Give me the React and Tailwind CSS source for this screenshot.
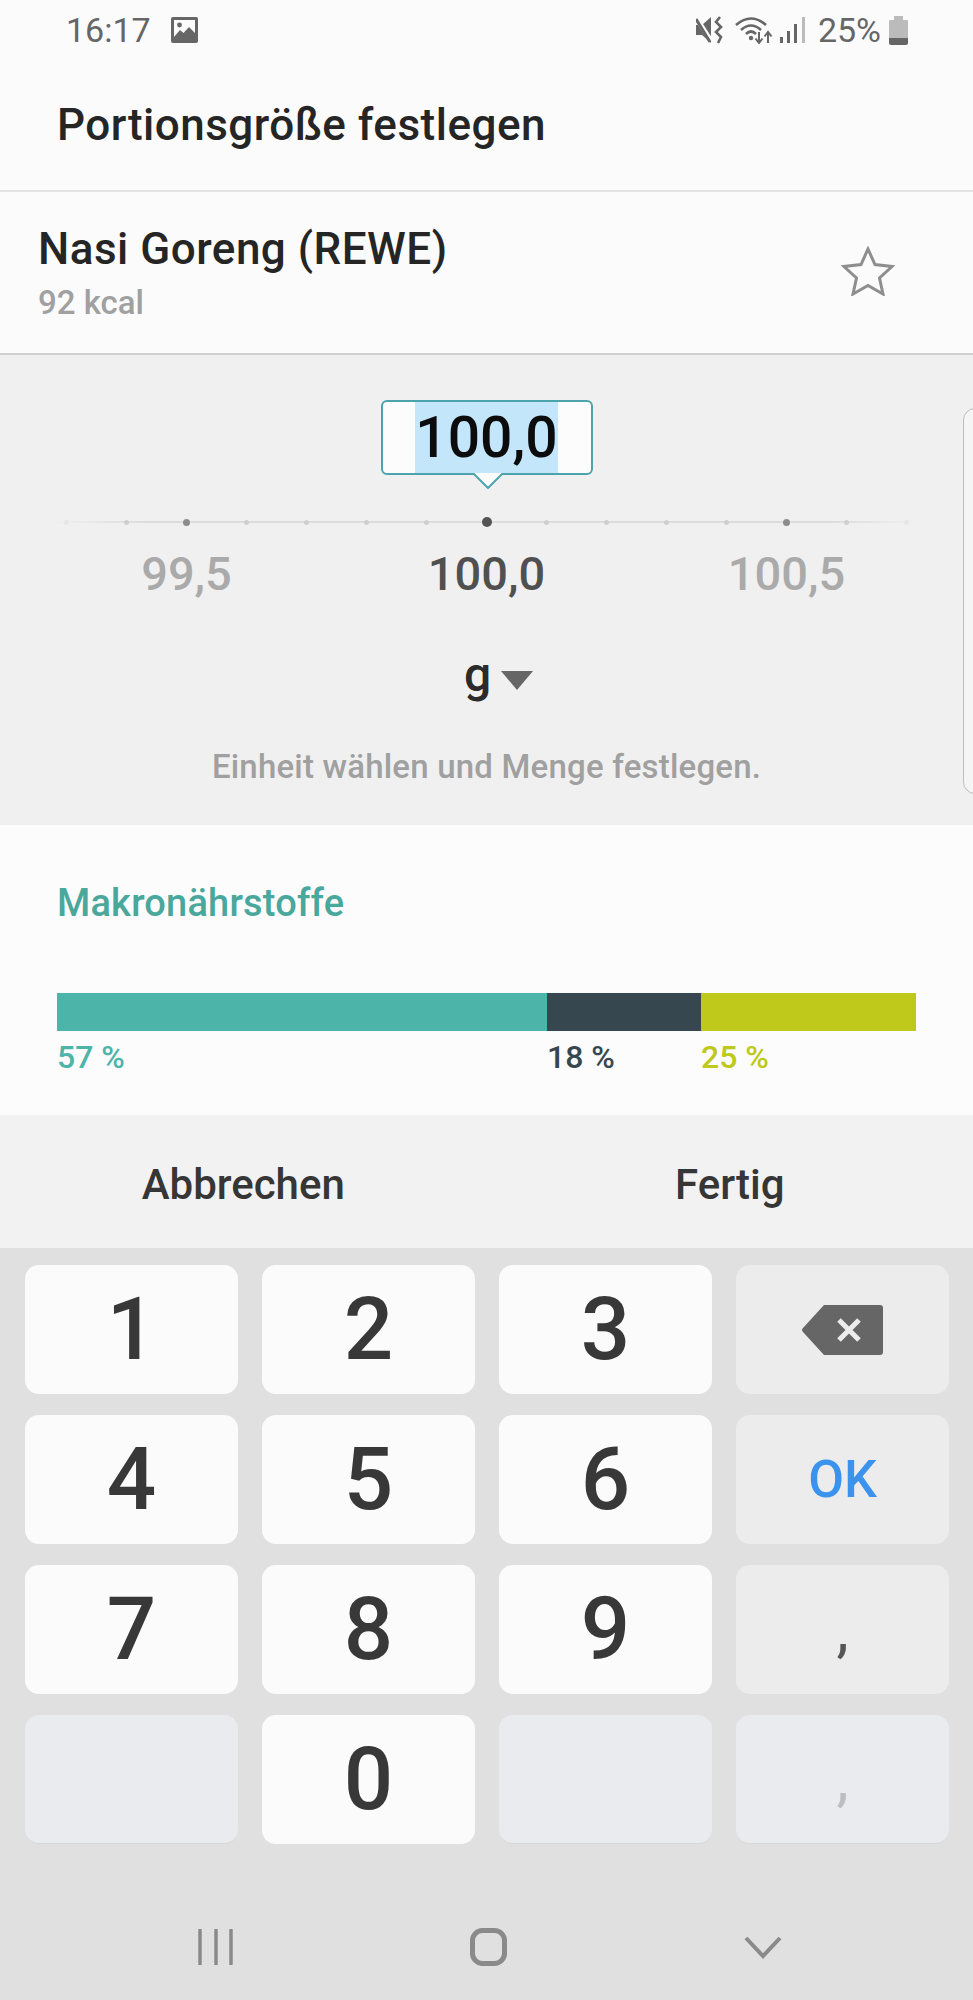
import React from 'react';

//------------------------------------------------------------------------------------------------
// Static data
//------------------------------------------------------------------------------------------------
const rulerTicks = [0, 1, 2, 3, 4, 5, 6, 7, 8, 9, 10, 11, 12, 13, 14];
const faintTicks = [0, 14];
const majorTicks = [2, 12];
const centerTick = 7;

const bodyFont = 'font-["Roboto",_"Liberation_Sans",_sans-serif]';

//------------------------------------------------------------------------------------------------
// Status bar icons
//------------------------------------------------------------------------------------------------
function ImageIcon() {
  return (
    <svg width="27" height="26" viewBox="0 0 27 26" className="ml-[20px]">
      <rect width="27" height="26" rx="2" fill="#666" />
      <rect x="3" y="3" width="21" height="20" fill="#fbfbfb" />
      <circle cx="8.5" cy="8" r="2.4" fill="#666" />
      <path d="M3 20 L9 13 L12.5 16 L18 10 L24 16 V23 H3 Z" fill="#666" />
    </svg>
  );
}

function MuteIcon() {
  return (
    <svg width="27" height="28" viewBox="0 0 27 28">
      <path d="M0 9 H6 L15 1 V27 L6 19 H0 Z" fill="#666" />
      <path d="M1 3 L15 25" stroke="#fbfbfb" strokeWidth="5" />
      <path d="M0 3 L14 26" stroke="#666" strokeWidth="3" />
      <path d="M24 1 L20 6 L25 11 L20 16 L25 21 L22 27" fill="none" stroke="#666" strokeWidth="2.6" />
    </svg>
  );
}

function WifiIcon() {
  return (
    <svg width="38" height="28" viewBox="0 0 38 28">
      <path d="M1 9 Q16 -4 31 9" fill="none" stroke="#666" strokeWidth="2.6" />
      <path d="M6 14 Q16 5 26 14" fill="none" stroke="#666" strokeWidth="2.6" />
      <path d="M11 18 Q16 13 21 18" fill="none" stroke="#666" strokeWidth="2.6" />
      <circle cx="16" cy="22" r="2.2" fill="#666" />
      <path d="M24 16 V26 M20.5 22.5 L24 27 L27.5 22.5" fill="none" stroke="#666" strokeWidth="2" />
      <path d="M33 27 V17 M29.5 20.5 L33 16 L36.5 20.5" fill="none" stroke="#666" strokeWidth="2" />
    </svg>
  );
}

function SignalIcon() {
  return (
    <svg width="25" height="26" viewBox="0 0 25 26">
      <rect x="0" y="20" width="3" height="6" fill="#666" />
      <rect x="7" y="14" width="3" height="12" fill="#666" />
      <rect x="14" y="7" width="3" height="19" fill="#666" />
      <rect x="22" y="0" width="3" height="26" fill="#bbb" />
    </svg>
  );
}

function BatteryIcon() {
  return (
    <svg width="19" height="29" viewBox="0 0 19 29" className="ml-[8px]">
      <path d="M5 0 H14 V4 H18 Q19 4 19 5 V22 H0 V5 Q0 4 1 4 H5 Z" fill="#bbb" />
      <path d="M0 22 H19 V27 Q19 29 17 29 H2 Q0 29 0 27 Z" fill="#666" />
    </svg>
  );
}

//------------------------------------------------------------------------------------------------
// Status bar
//------------------------------------------------------------------------------------------------
function StatusBar() {
  return (
    <div className="flex h-[60px] items-center justify-between pl-[66px] pr-[65px] text-[34px] leading-none text-[#666]">
      <div className="flex items-center">
        <span>16:17</span>
        <ImageIcon />
      </div>
      <div className="flex items-center">
        <MuteIcon />
        <div className="ml-[12px]"><WifiIcon /></div>
        <div className="ml-[7px]"><SignalIcon /></div>
        <span className="ml-[13px]">25%</span>
        <BatteryIcon />
      </div>
    </div>
  );
}

//------------------------------------------------------------------------------------------------
// Amount picker (bubble, ruler, unit)
//------------------------------------------------------------------------------------------------
function AmountBubble() {
  return (
    <div className="relative flex h-[75px] w-[212px] justify-center rounded-[6px] border-2 border-[#4ba4ac] bg-[#fcfcfc]">
      <span className="flex h-full w-[143px] items-center justify-center bg-[#c3e6fb] text-[57px] font-medium leading-none text-[#0c0c0c]">
        100,0
      </span>
      <svg width="32" height="16" viewBox="0 0 32 16" className="absolute left-[89px] top-[71px]">
        <path d="M1 0 L16 15 L31 0" fill="#fcfcfc" stroke="#4ba4ac" strokeWidth="2" />
        <rect x="3" y="0" width="26" height="1" fill="#fcfcfc" />
      </svg>
    </div>
  );
}

function RulerTick({ index }) {
  if (index === centerTick) {
    return <span className="size-[10px] rounded-full bg-[#555]" />;
  }
  if (majorTicks.includes(index)) {
    return <span className="size-[7px] rounded-full bg-[#8c8c8c]" />;
  }
  if (faintTicks.includes(index)) {
    return <span className="size-[5px] rounded-full bg-[#e6e6e6]" />;
  }
  return <span className="size-[5px] rounded-full bg-[#cfcfcf]" />;
}

function Ruler() {
  return (
    <div className="mt-[40px] grid h-[14px] w-[900px] grid-cols-15 bg-[linear-gradient(to_right,transparent_2%,#dcdcdc_12%,#dcdcdc_88%,transparent_98%)] bg-[length:100%_2px] bg-center bg-no-repeat">
      {rulerTicks.map((tick) => (
        <div key={tick} className="flex items-center justify-center">
          <RulerTick index={tick} />
        </div>
      ))}
    </div>
  );
}

function AmountPicker() {
  return (
    <div className="relative flex h-[470px] flex-col items-center overflow-hidden bg-[#f0f0f0] pt-[45px]">
      <AmountBubble />
      <Ruler />
      <div className="mt-[17px] grid w-[900px] grid-cols-3 text-center text-[47px] font-medium leading-[56px] text-[#aaaaaa]">
        <span>99,5</span>
        <span className="text-[#505050]">100,0</span>
        <span>100,5</span>
      </div>
      <div className="ml-[24px] mt-[45px] flex h-[56px] items-center">
        <span className="text-[48px] font-medium leading-none text-[#2b2b2b]">g</span>
        <svg width="32" height="19" viewBox="0 0 32 19" className="ml-[10px] mt-[10px]">
          <path d="M0 0 H32 L16 19 Z" fill="#666" />
        </svg>
      </div>
      <div className="mt-[44px] text-[33px] font-medium leading-[40px] tracking-[0.2px] text-[#a0a0a0]">
        Einheit wählen und Menge festlegen.
      </div>
      {/* edge of the panel peeking in from the right */}
      <div className="absolute left-[963px] top-[53px] h-[386px] w-[20px] rounded-l-[12px] border border-[#bdbdbd] bg-[#f5f5f5]" />
    </div>
  );
}

//------------------------------------------------------------------------------------------------
// Macro nutrient bar
//------------------------------------------------------------------------------------------------
function Macros() {
  return (
    <div className="h-[290px] bg-[#fcfcfc] px-[57px] pt-[54px]">
      <div className="text-[38px] font-medium leading-[48px] tracking-[0.2px] text-[#4aa79c]">Makronährstoffe</div>
      <div className="mt-[66px] flex h-[38px] w-[859px]">
        <div className="w-[490px] bg-[#4db4aa]" />
        <div className="w-[154px] bg-[#37474f]" />
        <div className="w-[215px] bg-[#bec91c]" />
      </div>
      <div className="mt-[6px] flex w-[859px] text-[32px] font-medium leading-[40px]">
        <span className="w-[490px] text-[#4db4aa]">57 %</span>
        <span className="w-[154px] text-[#37474f]">18 %</span>
        <span className="w-[215px] text-[#bec91c]">25 %</span>
      </div>
    </div>
  );
}

//------------------------------------------------------------------------------------------------
// Number keyboard
//------------------------------------------------------------------------------------------------
function DigitKey({ value }) {
  return (
    <div className="flex h-[129px] items-center justify-center rounded-[14px] bg-[#fbfbfb] text-[87px] font-medium leading-none text-[#383838]">
      {value}
    </div>
  );
}

function Keyboard() {
  return (
    <div className="flex flex-1 flex-col bg-[#e0e0e0] pt-[17px]">
      <div className="grid grid-cols-[repeat(4,213px)] gap-x-[24px] gap-y-[21px] px-[25px]">
        <DigitKey value="1" />
        <DigitKey value="2" />
        <DigitKey value="3" />
        <div className="flex h-[129px] items-center justify-center rounded-[14px] bg-[#ececec]">
          <svg width="81" height="50" viewBox="0 0 81 50">
            <path d="M22 0 H78 Q81 0 81 3 V47 Q81 50 78 50 H22 L1 27 Q-1 25 1 23 Z" fill="#666" />
            <path d="M37 15 L57 35 M57 15 L37 35" stroke="#ececec" strokeWidth="5" />
          </svg>
        </div>
        <DigitKey value="4" />
        <DigitKey value="5" />
        <DigitKey value="6" />
        <div className="flex h-[129px] items-center justify-center rounded-[14px] bg-[#ececec] text-[52px] font-medium leading-none text-[#3c93ee]">
          OK
        </div>
        <DigitKey value="7" />
        <DigitKey value="8" />
        <DigitKey value="9" />
        <div className="flex h-[129px] items-center justify-center rounded-[14px] bg-[#ececec] text-[62px] leading-none text-[#555]">
          ,
        </div>
        <div className="h-[129px] rounded-[14px] border-b border-[#d6d7da] bg-[#eaebef]" />
        <DigitKey value="0" />
        <div className="h-[129px] rounded-[14px] border-b border-[#d6d7da] bg-[#eaebef]" />
        <div className="flex h-[129px] items-center justify-center rounded-[14px] border-b border-[#d6d7da] bg-[#eaebef] text-[62px] leading-none text-[#bcbec1]">
          ,
        </div>
      </div>
      <NavBar />
    </div>
  );
}

function NavBar() {
  return (
    <div className="mt-[84px] flex items-center pl-[198px]">
      <svg width="36" height="36" viewBox="0 0 36 36">
        <path d="M2 1 V35 M18 1 V35 M33 1 V35" stroke="#8a8a8a" strokeWidth="3.5" strokeLinecap="round" />
      </svg>
      <svg width="37" height="38" viewBox="0 0 37 38" className="ml-[236px]">
        <rect x="2.5" y="2.5" width="32" height="33" rx="10" fill="none" stroke="#8a8a8a" strokeWidth="5" />
      </svg>
      <svg width="38" height="23" viewBox="0 0 38 23" className="ml-[237px]">
        <path d="M2 2 L19 20 L36 2" fill="none" stroke="#8a8a8a" strokeWidth="4" />
      </svg>
    </div>
  );
}

//------------------------------------------------------------------------------------------------
// Page
//------------------------------------------------------------------------------------------------
export default function App() {
  return (
    <div className={`flex h-[2000px] w-full flex-col overflow-hidden bg-[#fbfbfb] ${bodyFont}`}>
      <StatusBar />

      <div className="flex h-[132px] items-center border-b-2 border-[#e4e4e4] pl-[57px] text-[44px] font-medium leading-none tracking-[0.5px] text-[#252525]">
        Portionsgröße festlegen
      </div>

      <div className="flex h-[163px] items-start justify-between border-b-2 border-[#cfcfcf] pl-[38px] pr-[78px] pt-[31px]">
        <div>
          <div className="text-[44px] font-medium leading-[52px] tracking-[0.5px] text-[#252525]">Nasi Goreng (REWE)</div>
          <div className="mt-[8px] text-[33px] font-medium leading-[40px] text-[#a0a0a0]">92 kcal</div>
        </div>
        <svg width="54" height="50" viewBox="0 0 54 50" className="mt-[23px]">
          <path
            d="M27 3 L34 18.5 L51 20.5 L38.5 32 L42 48 L27 39.5 L12 48 L15.5 32 L3 20.5 L20 18.5 Z"
            fill="none"
            stroke="#8e8e8e"
            strokeWidth="3"
          />
        </svg>
      </div>

      <AmountPicker />
      <Macros />

      <div className="grid h-[133px] grid-cols-2 items-center bg-[#f2f2f2] pt-[6px] text-center text-[42px] font-medium leading-none text-[#363636]">
        <span>Abbrechen</span>
        <span>Fertig</span>
      </div>

      <Keyboard />
    </div>
  );
}
